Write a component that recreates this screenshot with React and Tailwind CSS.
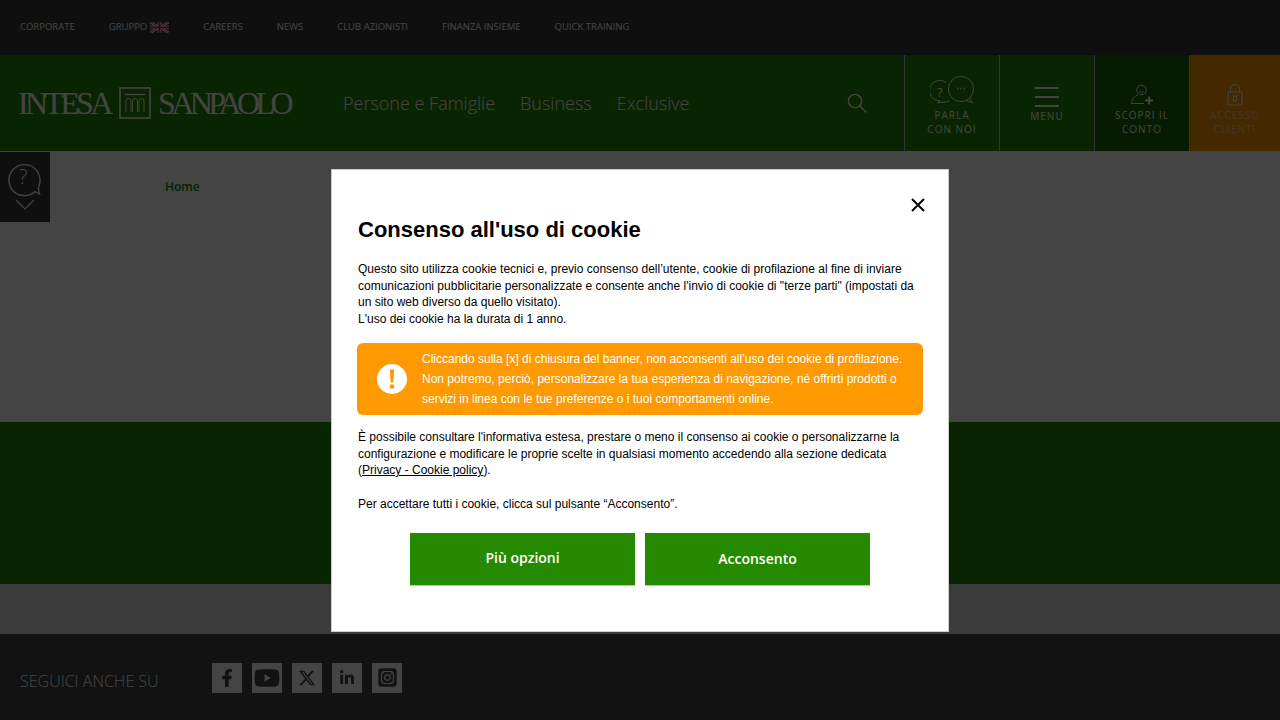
import { FaFacebookF, FaYoutube, FaLinkedinIn } from "react-icons/fa";
import { FaXTwitter, FaSquareInstagram } from "react-icons/fa6";

const topLinks = ["CORPORATE", "GRUPPO", "CAREERS", "NEWS", "CLUB AZIONISTI", "FINANZA INSIEME", "QUICK TRAINING"];
const mainLinks = ["Persone e Famiglie", "Business", "Exclusive"];

function Flag() {
  return (
    <svg width="19" height="11" viewBox="0 0 19 11" className="ml-[3px]">
      <rect width="19" height="11" fill="#2a3f8f" />
      <path d="M0 0L19 11M19 0L0 11" stroke="#fff" strokeWidth="2.4" />
      <path d="M0 0L19 11M19 0L0 11" stroke="#c8102e" strokeWidth="0.8" />
      <path d="M9.5 0V11M0 5.5H19" stroke="#fff" strokeWidth="3.6" />
      <path d="M9.5 0V11M0 5.5H19" stroke="#c8102e" strokeWidth="2" />
    </svg>
  );
}

function TopBar() {
  return (
    <div className="h-[55px] bg-[#383838] flex items-center pl-5 gap-[34px] text-white text-[9.5px]">
      {topLinks.map((l) => (
        <a key={l} href="#" className="flex items-center">
          {l}
          {l === "GRUPPO" && <Flag />}
        </a>
      ))}
    </div>
  );
}

function Logo() {
  return (
    <div className="flex items-center text-white font-['Liberation_Serif',serif] text-[32px] leading-none ml-[18px] w-[273px] shrink-0">
      <span className="tracking-[-3.7px] w-[101px]">INTESA</span>
      <svg width="32" height="32" viewBox="0 0 32 32" fill="none" stroke="#fff" className="shrink-0">
        <rect x="1" y="1" width="30" height="30" strokeWidth="1.6" />
        <path d="M6 7.5H26" strokeWidth="1.4" />
        <path d="M7 25V14a2.5 2.5 0 0 1 5 0V25M13.5 25V14a2.5 2.5 0 0 1 5 0V25M20 25V14a2.5 2.5 0 0 1 5 0V25" strokeWidth="0.9" />
      </svg>
      <span className="tracking-[-4.6px] ml-[7px]">SANPAOLO</span>
    </div>
  );
}

function ChatIcon() {
  return (
    <svg width="44" height="30" viewBox="0 0 44 30" fill="none" stroke="#fff" strokeWidth="1">
      <path d="M15 6.5a10.2 10.2 0 1 0-6 18.3l-2.5 2 6-.8a10 10 0 0 0 6-1" transform="translate(1 0)" />
      <circle cx="31" cy="13" r="12.6" />
      <path d="M36 24.5l6.5 2-2.5-4" />
      <text x="7" y="21" fontSize="13" fill="#fff" stroke="none" fontFamily="Open Sans, sans-serif">?</text>
      <path d="M27 12.5h1.4M30.3 12.5h1.4M33.6 12.5h1.4" strokeWidth="1.6" />
    </svg>
  );
}

function MenuIcon() {
  return (
    <svg width="24" height="20" viewBox="0 0 24 20" stroke="#fff" strokeWidth="2">
      <path d="M0 1H24M0 10H24M0 19H24" />
    </svg>
  );
}

function UserPlusIcon() {
  return (
    <svg width="24" height="22" viewBox="0 0 24 22" fill="none" stroke="#fff" strokeWidth="1">
      <circle cx="11.5" cy="6" r="4.8" />
      <path d="M9.5 5.5v.1M13.5 5.5v.1M9.5 7.5c1 1 3 1 4 0" />
      <path d="M8 11c-3 1-6.5 4-6.5 8.5H14" />
      <path d="M19 12.5v8M15 16.5h8" strokeWidth="2" />
    </svg>
  );
}

function LockIcon() {
  return (
    <svg width="16" height="22" viewBox="0 0 16 22" fill="none" stroke="#fff" strokeWidth="1">
      <path d="M3.5 8V5a4.5 4.5 0 0 1 9 0V8" />
      <rect x="1" y="8" width="14" height="13" rx="1" />
      <rect x="6.5" y="12" width="3" height="5" />
    </svg>
  );
}

function HeaderButton({ icon, lines, className = "", textClass = "" }) {
  return (
    <a href="#" className={`w-[95px] border-l border-[#bfbfbf] flex flex-col items-center justify-end pb-[15px] text-[10px] leading-[14px] tracking-[1px] text-white ${className}`}>
      <div className="mb-[2px]">{icon}</div>
      <div className={`text-center ${textClass}`}>
        {lines.map((l) => (
          <div key={l}>{l}</div>
        ))}
      </div>
    </a>
  );
}

function Header() {
  return (
    <div className="h-[96px] bg-[#258700] flex">
      <div className="flex-1 flex items-center">
        <Logo />
        <nav className="flex gap-[25px] ml-[52px] text-[18px] font-light text-white">
          {mainLinks.map((l) => (
            <a key={l} href="#">{l}</a>
          ))}
        </nav>
        <svg width="20" height="20" viewBox="0 0 20 20" fill="none" stroke="#fff" strokeWidth="1.4" className="ml-auto mr-[37px]">
          <circle cx="8" cy="8" r="6.6" />
          <path d="M12.8 12.8L19.5 19.5" />
        </svg>
      </div>
      <HeaderButton icon={<ChatIcon />} lines={["PARLA", "CON NOI"]} className="pb-[14px]" />
      <HeaderButton icon={<MenuIcon />} lines={["MENU"]} className="pb-[28px]" />
      <HeaderButton icon={<UserPlusIcon />} lines={["SCOPRI IL", "CONTO"]} className="bg-[#176a00]" />
      <HeaderButton icon={<LockIcon />} lines={["ACCESSO", "CLIENTI"]} className="bg-[#ff9900] !w-[91px]" textClass="text-white/50" />
    </div>
  );
}

function HelpBox() {
  return (
    <div className="absolute left-0 top-[152px] w-[50px] h-[70px] bg-[#383838] flex flex-col items-center">
      <svg width="34" height="36" viewBox="0 0 34 36" fill="none" stroke="#fff" strokeWidth="1.4" className="mt-[9px] mr-[1px]">
        <path d="M27 30.5a15.5 15.5 0 1 1 4-6c-.7 2-1 4.200.5 8.500l-4.500-2.500" />
        <text x="11" y="23" fontSize="20" fill="#fff" stroke="none" fontFamily="Open Sans, sans-serif" fontWeight="300">?</text>
      </svg>
      <svg width="20" height="11" viewBox="0 0 20 11" fill="none" stroke="#fff" strokeWidth="1.2" className="mt-[2px]">
        <path d="M1 1L10 10L19 1" />
      </svg>
    </div>
  );
}

function Footer() {
  const socials = [
    <FaFacebookF size={18} />,
    <FaYoutube size={26} />,
    <FaXTwitter size={18} />,
    <FaLinkedinIn size={16} />,
    <FaSquareInstagram size={21} />,
  ];
  return (
    <div className="h-[86px] bg-[#444444] flex items-center pl-5 text-white">
      <span className="text-[16px] font-light w-[192px] mt-[8px]">SEGUICI ANCHE SU</span>
      <div className="flex gap-[10px] mt-[3px] -translate-y-[1px]">
        {socials.map((s, i) => (
          <a key={i} href="#" className="w-[30px] h-[30px] bg-white text-[#444444] flex items-center justify-center">
            {s}
          </a>
        ))}
      </div>
    </div>
  );
}

function CookieModal() {
  return (
    <div className="fixed left-[331px] top-[169px] w-[618px] h-[463px] bg-white border border-[#cccccc] text-black font-['Liberation_Sans',Arial,sans-serif] text-[12px] leading-[16.5px] px-[26px]">
      <button className="absolute right-[23px] top-[28px]">
        <svg width="14" height="14" viewBox="0 0 14 14" stroke="#000" strokeWidth="2">
          <path d="M1 1L13 13M13 1L1 13" />
        </svg>
      </button>
      <h2 className="text-[22px] leading-[26px] font-bold mt-[47px] mb-[18px]">Consenso all'uso di cookie</h2>
      <p>
        Questo sito utilizza cookie tecnici e, previo consenso dell’utente, cookie di profilazione al fine di inviare comunicazioni pubblicitarie personalizzate e consente anche l'invio di cookie di "terze parti" (impostati da un sito web diverso da quello visitato).
        <br />
        L'uso dei cookie ha la durata di 1 anno.
      </p>
      <div className="mt-[16px] -ml-[1px] w-[566px] h-[72px] rounded-[6px] bg-[#ff9900] text-white flex items-center pl-[20px] leading-[20px]">
        <svg width="30" height="30" viewBox="0 0 30 30" className="shrink-0 mr-[15px]">
          <circle cx="15" cy="15" r="15" fill="#fff" />
          <path d="M12.700 5.500h4.600l-1 13h-2.600z" fill="#ff9900" />
          <circle cx="15" cy="22.500" r="2.300" fill="#ff9900" />
        </svg>
        <p>
          Cliccando sulla [x] di chiusura del banner, non acconsenti all’uso dei cookie di profilazione. Non potremo, perciò, personalizzare la tua esperienza di navigazione, né offrirti prodotti o servizi in linea con le tue preferenze o i tuoi comportamenti online.
        </p>
      </div>
      <p className="mt-[14px]">
        È possibile consultare l'informativa estesa, prestare o meno il consenso ai cookie o personalizzarne la configurazione e modificare le proprie scelte in qualsiasi momento accedendo alla sezione dedicata (<a href="#" className="underline">Privacy - Cookie policy</a>).
      </p>
      <p className="mt-[17px]">Per accettare tutti i cookie, clicca sul pulsante “Acconsento”.</p>
      <div className="flex justify-center gap-[10px] mt-[21px] font-['Open_Sans',sans-serif] text-[14px] font-semibold text-white">
        <button className="w-[225px] h-[53px] bg-[#268a00] border-b border-[#a5d295] pb-[2px]">Più opzioni</button>
        <button className="w-[225px] h-[53px] bg-[#268a00] border-b border-[#a5d295]">Acconsento</button>
      </div>
    </div>
  );
}

export default function App() {
  return (
    <div className="relative h-[720px] overflow-hidden bg-white font-['Open_Sans',sans-serif]">
      <TopBar />
      <Header />
      <main className="h-[271px] pl-[165px] pt-[22px]">
        <a href="#" className="text-[12px] font-semibold text-[#258700]">Home</a>
      </main>
      <div className="h-[162px] bg-[#258700]" />
      <div className="h-[50px] bg-[#dcdcdc]" />
      <Footer />
      <HelpBox />
      <div className="fixed inset-0 bg-black/[.733]" />
      <CookieModal />
    </div>
  );
}
